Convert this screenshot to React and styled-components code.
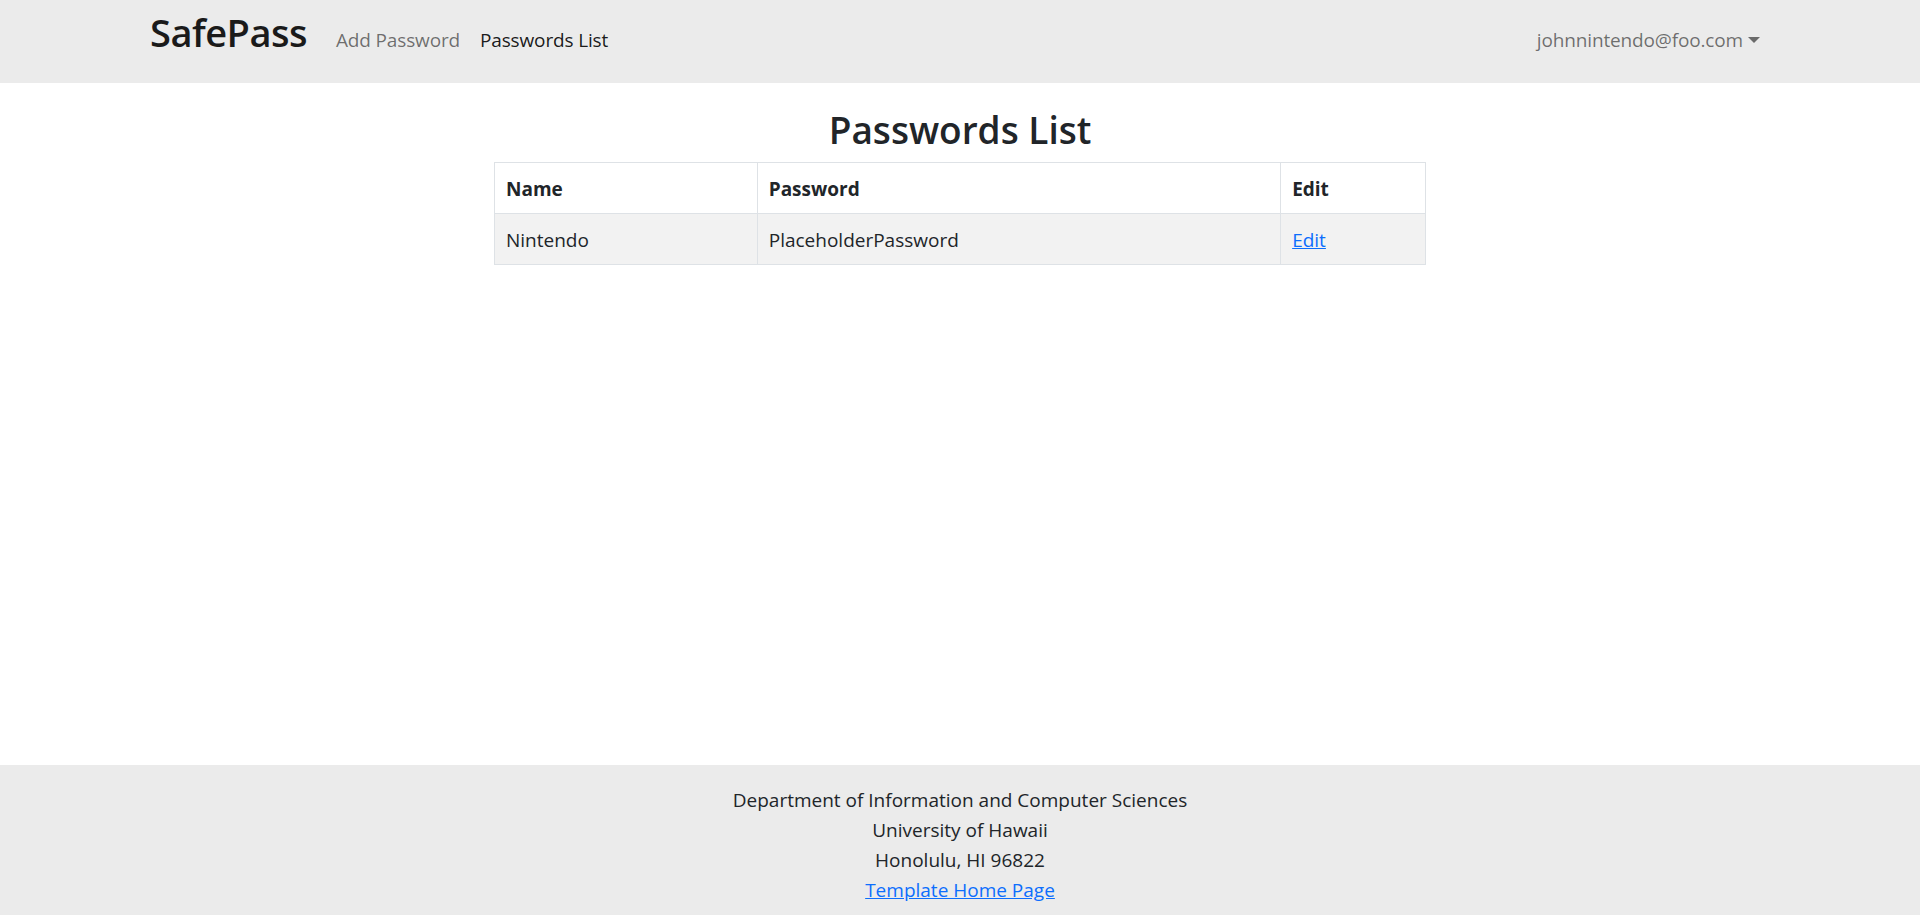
import React from "react";
import styled, { createGlobalStyle } from "styled-components";

const GlobalStyle = createGlobalStyle`
  *, *::before, *::after { box-sizing: border-box; }
  html, body { margin: 0; padding: 0; }
  body {
    font-family: "Open Sans", "Noto Sans", sans-serif;
    font-size: 19px;
    line-height: 30px;
    color: #212529;
    background: #ffffff;
  }
  #root { min-height: 100vh; display: flex; flex-direction: column; }
`;

const Page = styled.div`
  min-height: 100vh;
  display: flex;
  flex-direction: column;
`;

const NavBar = styled.nav`
  background: #ebebeb;
  height: 83px;
  padding-top: 10px;
  display: flex;
  align-items: flex-start;
`;

const Container = styled.div`
  width: 1650px;
  max-width: 100%;
  margin: 0 auto;
  padding: 0 15px;
  display: flex;
  align-items: baseline;
`;

const Brand = styled.a`
  font-size: 38px;
  font-weight: 600;
  line-height: 1.2;
  color: #1a1a1a;
  text-decoration: none;
  margin-right: 19px;
  letter-spacing: -0.5px;
`;

const NavList = styled.div`
  display: flex;
  align-items: baseline;
  flex: 1;
`;

const NavLink = styled.a`
  padding: 10px;
  font-size: 19px;
  letter-spacing: -0.15px;
  color: ${(p) => (p.$active ? "rgba(0,0,0,0.9)" : "rgba(0,0,0,0.55)")};
  text-decoration: none;
  cursor: pointer;
`;

const UserMenu = styled(NavLink)`
  margin-left: auto;
`;

const Caret = styled.span`
  display: inline-block;
  margin-left: 5px;
  width: 0;
  height: 0;
  vertical-align: 4px;
  border-top: 6px solid currentColor;
  border-left: 6px solid transparent;
  border-right: 6px solid transparent;
`;

const Main = styled.main`
  flex: 1;
  padding-top: 25px;
  display: flex;
  flex-direction: column;
  align-items: center;
`;

const Title = styled.h2`
  margin: 0 0 10px;
  font-size: 37px;
  font-weight: 600;
  line-height: 1.2;
  text-align: center;
  color: #212529;
`;

const Table = styled.table`
  width: 932px;
  border-collapse: collapse;
  border: 1px solid #dee2e6;
`;

const Th = styled.th`
  text-align: left;
  font-weight: 700;
  padding: 11px 10px 9px 11px;
  border: 1px solid #dee2e6;
  width: ${(p) => p.$w}px;
`;

const Tr = styled.tr`
  background: ${(p) => (p.$striped ? "#f2f2f2" : "#ffffff")};
`;

const Td = styled.td`
  padding: 11px 10px 9px 11px;
  border: 1px solid #dee2e6;
`;

const Link = styled.a`
  color: #0d6efd;
  text-decoration: underline;
  cursor: pointer;
`;

const Footer = styled.footer`
  background: #ebebeb;
  padding: 20px 0 10px;
  text-align: center;
  color: #212529;
`;

const FooterLine = styled.div``;

const rows = [{ name: "Nintendo", password: "PlaceholderPassword" }];

export default function App() {
  return (
    <>
      <GlobalStyle />
      <Page>
        <NavBar>
          <Container>
            <Brand>SafePass</Brand>
            <NavList>
              <NavLink>Add Password</NavLink>
              <NavLink $active>Passwords List</NavLink>
              <UserMenu>
                johnnintendo@foo.com
                <Caret />
              </UserMenu>
            </NavList>
          </Container>
        </NavBar>
        <Main>
          <Title>Passwords List</Title>
          <Table>
            <thead>
              <tr>
                <Th $w={263}>Name</Th>
                <Th $w={524}>Password</Th>
                <Th $w={145}>Edit</Th>
              </tr>
            </thead>
            <tbody>
              {rows.map((r) => (
                <Tr key={r.name} $striped>
                  <Td>{r.name}</Td>
                  <Td>{r.password}</Td>
                  <Td>
                    <Link>Edit</Link>
                  </Td>
                </Tr>
              ))}
            </tbody>
          </Table>
        </Main>
        <Footer>
          <FooterLine>Department of Information and Computer Sciences</FooterLine>
          <FooterLine>University of Hawaii</FooterLine>
          <FooterLine>Honolulu, HI 96822</FooterLine>
          <FooterLine>
            <Link>Template Home Page</Link>
          </FooterLine>
        </Footer>
      </Page>
    </>
  );
}
